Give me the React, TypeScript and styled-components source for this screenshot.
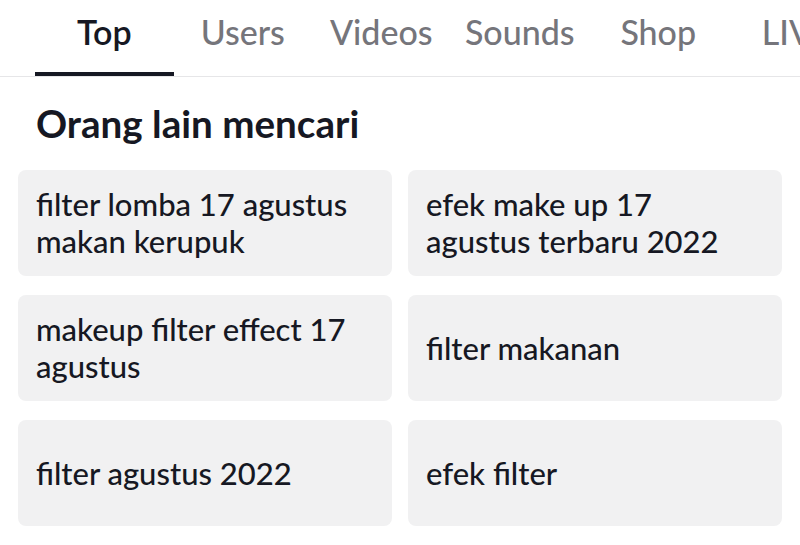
import React from "react";
import styled, { createGlobalStyle } from "styled-components";

const GlobalStyle = createGlobalStyle`
  html, body {
    margin: 0;
    padding: 0;
    background: #ffffff;
    font-family: "Lato", "Noto Sans", sans-serif;
    color: #161823;
  }
  #root {
    width: 800px;
    height: 545px;
    overflow: hidden;
  }
`;

const TabBar = styled.div`
  display: flex;
  height: 77px;
  padding-left: 35px;
  border-bottom: 1px solid #e6e6e8;
  box-sizing: border-box;
  overflow: hidden;
  white-space: nowrap;
`;

const Tab = styled.div<{ $active?: boolean }>`
  flex: 0 0 138.5px;
  display: flex;
  align-items: flex-start;
  justify-content: center;
  padding-top: 12px;
  box-sizing: border-box;
  font-size: 34px;
  line-height: 1.2;
  font-weight: ${(p) => (p.$active ? 600 : 500)};
  color: ${(p) => (p.$active ? "#161823" : "#75757b")};
  border-bottom: 5px solid ${(p) => (p.$active ? "#161823" : "transparent")};
  margin-bottom: -1px;
`;

const Section = styled.div`
  padding: 26px 18px 0;
`;

const Heading = styled.h2`
  margin: 0 0 27px 18px;
  font-size: 38.6px;
  font-weight: 700;
  line-height: 40px;
  color: #161823;
`;

const Grid = styled.div`
  display: grid;
  grid-template-columns: 374px 374px;
  grid-auto-rows: 106px;
  column-gap: 16px;
  row-gap: 19px;
`;

const Card = styled.div`
  display: flex;
  align-items: center;
  padding: 0 26px 0 18px;
  background: #f1f1f2;
  border-radius: 8px;
  font-size: 31px;
  font-weight: 500;
  line-height: 37px;
  color: #161823;
`;

const tabs = ["Top", "Users", "Videos", "Sounds", "Shop", "LIVE"];

const suggestions = [
  "filter lomba 17 agustus makan kerupuk",
  "efek make up 17 agustus terbaru 2022",
  "makeup filter effect 17 agustus",
  "filter makanan",
  "filter agustus 2022",
  "efek filter",
];

export default function App() {
  return (
    <>
      <GlobalStyle />
      <TabBar>
        {tabs.map((t, i) => (
          <Tab key={t} $active={i === 0}>
            {t}
          </Tab>
        ))}
      </TabBar>
      <Section>
        <Heading>Orang lain mencari</Heading>
        <Grid>
          {suggestions.map((s) => (
            <Card key={s}>{s}</Card>
          ))}
        </Grid>
      </Section>
    </>
  );
}
